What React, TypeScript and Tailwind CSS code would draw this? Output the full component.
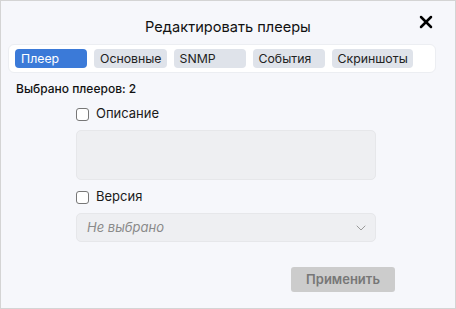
import React, { useState } from 'react';
import { X, ChevronDown } from 'lucide-react';

const tabs = ['Плеер', 'Основные', 'SNMP', 'События', 'Скриншоты'];

const App: React.FC = () => {
  const [active, setActive] = useState(0);
  const [desc, setDesc] = useState(false);
  const [version, setVersion] = useState(false);

  return (
    <div
      className="w-[456px] h-[309px] bg-[#f6f7fb] border border-[#d4d4d4] relative text-[#1a1a1a]"
      style={{ fontFamily: 'Inter, "Noto Sans", sans-serif' }}
    >
      {/* Header */}
      <div className="h-[43px] flex items-center justify-center pt-[8px]">
        <h2 className="text-[14.6px] leading-[20px] text-[#111]">Редактировать плееры</h2>
      </div>
      <button className="absolute right-[19px] top-[11px] text-black">
        <X className="w-[20px] h-[20px]" strokeWidth={3} />
      </button>

      {/* Tabs */}
      <div className="ml-[7px] mr-[19px] h-[29px] bg-white border border-[#eceef2] rounded-[6px] flex items-center gap-[7px] px-[6px]">
        {tabs.map((t, i) => (
          <button
            key={t}
            onClick={() => setActive(i)}
            className={
              'h-[19px] min-w-[72px] pl-[6px] pr-[5px] rounded-[4px] text-[12.3px] leading-[19px] text-left ' +
              (i === active ? 'bg-[#3b7ad8] text-white' : 'bg-[#dfe3ea] text-[#222]')
            }
          >
            {t}
          </button>
        ))}
      </div>

      <div className="px-[15px] pt-[8px]">
        <p className="text-[12px] leading-[16px] font-medium text-[#111]">Выбрано плееров: 2</p>

        <div className="ml-[60px] w-[300px] mt-[9px]">
          <label className="flex items-center gap-[7px] h-[16px] text-[13px]">
            <input
              type="checkbox"
              checked={desc}
              onChange={() => setDesc(!desc)}
              className="appearance-none w-[13px] h-[13px] border border-[#777] rounded-[3px] bg-white"
            />
            Описание
          </label>
          <div className="mt-[8px] h-[50px] bg-[#eeeff2] border border-[#e6e7ea] rounded-[5px]" />

          <label className="flex items-center gap-[7px] h-[16px] text-[13px] mt-[9px]">
            <input
              type="checkbox"
              checked={version}
              onChange={() => setVersion(!version)}
              className="appearance-none w-[13px] h-[13px] border border-[#777] rounded-[3px] bg-white"
            />
            Версия
          </label>
          <div className="mt-[8px] h-[29px] bg-[#eeeff2] border border-[#e6e7ea] rounded-[5px] flex items-center justify-between pl-[10px] pr-[6px]">
            <span className="italic text-[13px] text-[#8a8a8a]">Не выбрано</span>
            <ChevronDown className="w-[16px] h-[16px] text-[#9a9a9a]" strokeWidth={1.5} />
          </div>

          <div className="flex justify-end mt-[25px]">
            <button className="w-[104px] h-[25px] mr-[-19px] bg-[#cccccc] rounded-[3px] text-[13px] font-semibold text-[#777]">
              Применить
            </button>
          </div>
        </div>
      </div>
    </div>
  );
};

export default App;
